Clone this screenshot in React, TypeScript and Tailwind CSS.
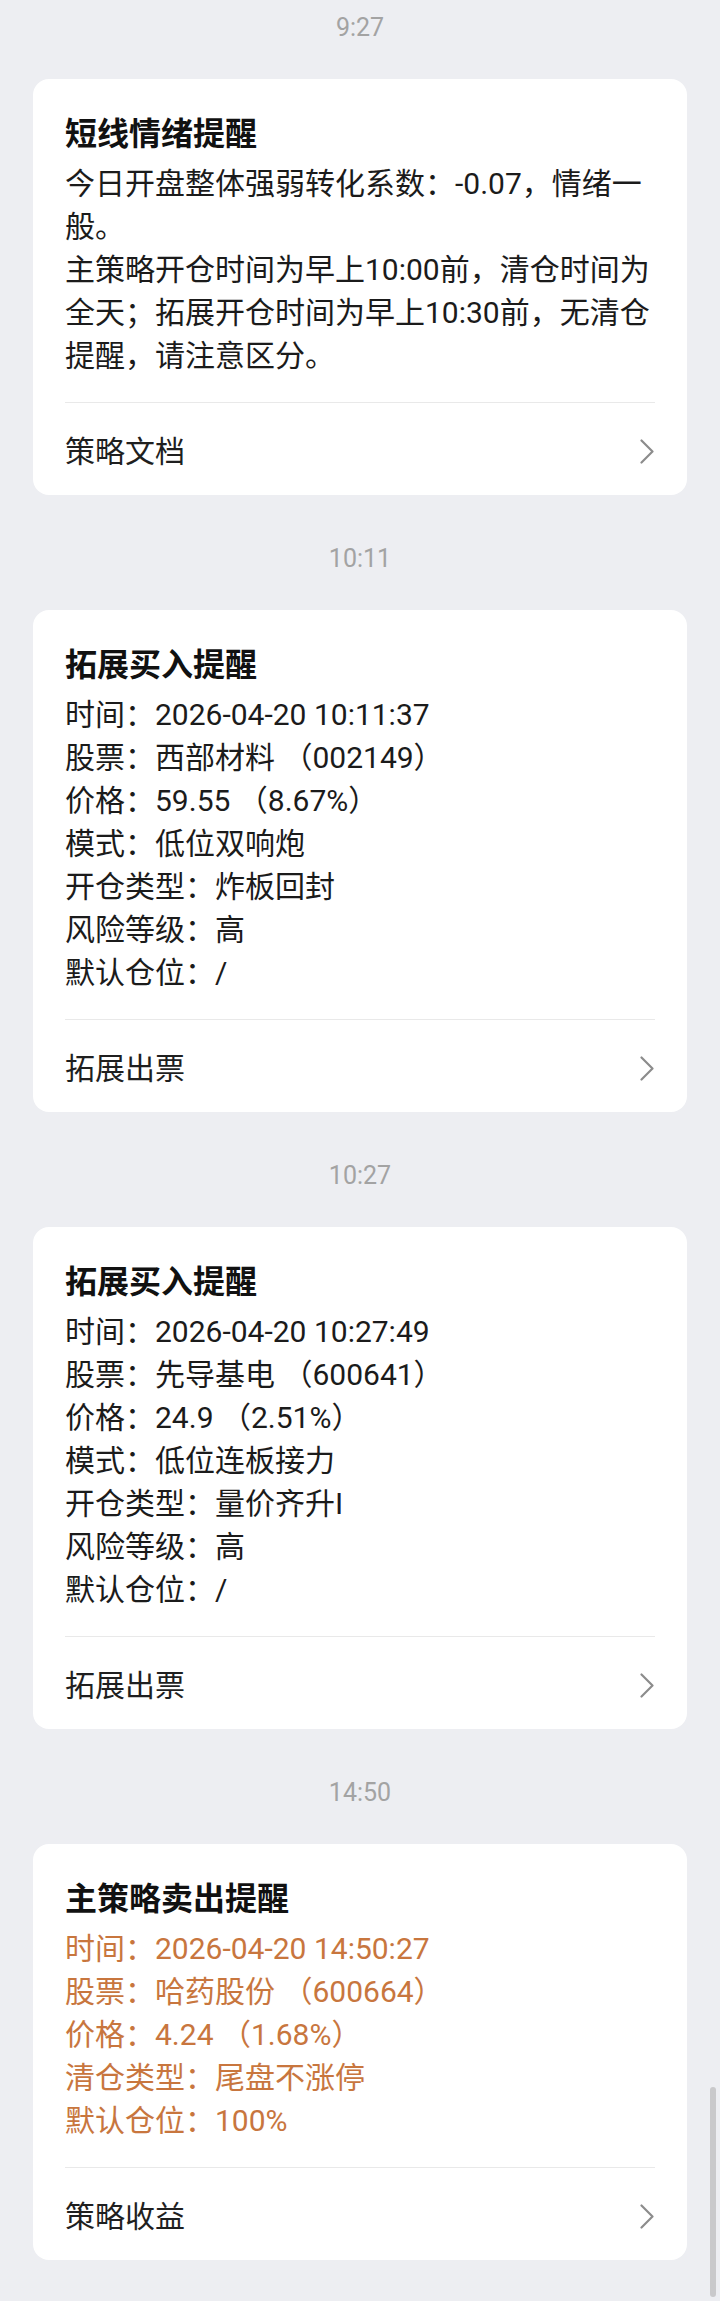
import React from "react";

const FONT = { fontFamily: 'Roboto, "Noto Sans CJK SC", "Noto Sans", sans-serif' };

function Chevron() {
  return (
    <svg width="16" height="25" viewBox="0 0 16 25" fill="none" className="shrink-0">
      <path d="M2.5 1.5 L13.5 12.5 L2.5 23.5" stroke="#8c8c8c" strokeWidth="2.2" strokeLinecap="round" strokeLinejoin="round" />
    </svg>
  );
}

function TimeStamp({ t, first }: { t: string; first?: boolean }) {
  return (
    <div className={`${first ? "pt-[10px]" : "pt-[46px]"} pb-[33px] h-auto`}>
      <div className="h-[36px] leading-[36px] text-center text-[25px] text-[#a3a3a3]">{t}</div>
    </div>
  );
}

function Card({
  title,
  lines,
  footer,
  orange,
}: {
  title: string;
  lines: string[];
  footer: string;
  orange?: boolean;
}) {
  return (
    <div className="mx-[33px] rounded-[16px] bg-white">
      <div className="px-[32px] pt-[33px] pb-[25px]">
        <div className="text-[32px] leading-[44px] font-bold text-[#111111]">{title}</div>
        <div className={`mt-[6px] text-[30px] leading-[43px] ${orange ? "text-[#c8763e]" : "text-[#1b1b1b]"}`}>
          {lines.map((l, i) => (
            <div key={i} className="whitespace-pre-wrap">{l}</div>
          ))}
        </div>
      </div>
      <div className="mx-[32px] h-px bg-[#e9e9e9]" />
      <div className="h-[92px] pt-[4px] px-[32px] flex items-center justify-between">
        <span className="text-[30px] text-[#1f1f1f]">{footer}</span>
        <Chevron />
      </div>
    </div>
  );
}

export default function App() {
  return (
    <div className="relative w-[720px] min-h-[2301px] bg-[#edeef2] pb-[40px]" style={FONT}>
      <TimeStamp t="9:27" first />
      <Card
        title="短线情绪提醒"
        lines={[
          "今日开盘整体强弱转化系数：-0.07，情绪一般。",
          "主策略开仓时间为早上10:00前，清仓时间为全天；拓展开仓时间为早上10:30前，无清仓提醒，请注意区分。",
        ]}
        footer="策略文档"
      />
      <TimeStamp t="10:11" />
      <Card
        title="拓展买入提醒"
        lines={[
          "时间：2026-04-20 10:11:37",
          "股票：西部材料 （002149）",
          "价格：59.55 （8.67%）",
          "模式：低位双响炮",
          "开仓类型：炸板回封",
          "风险等级：高",
          "默认仓位：/",
        ]}
        footer="拓展出票"
      />
      <TimeStamp t="10:27" />
      <Card
        title="拓展买入提醒"
        lines={[
          "时间：2026-04-20 10:27:49",
          "股票：先导基电 （600641）",
          "价格：24.9 （2.51%）",
          "模式：低位连板接力",
          "开仓类型：量价齐升I",
          "风险等级：高",
          "默认仓位：/",
        ]}
        footer="拓展出票"
      />
      <TimeStamp t="14:50" />
      <Card
        title="主策略卖出提醒"
        lines={[
          "时间：2026-04-20 14:50:27",
          "股票：哈药股份 （600664）",
          "价格：4.24 （1.68%）",
          "清仓类型：尾盘不涨停",
          "默认仓位：100%",
        ]}
        footer="策略收益"
        orange
      />
      <div className="absolute right-[4px] top-[2087px] w-[6px] h-[210px] rounded-full bg-[#c9c9cb]" />
    </div>
  );
}
